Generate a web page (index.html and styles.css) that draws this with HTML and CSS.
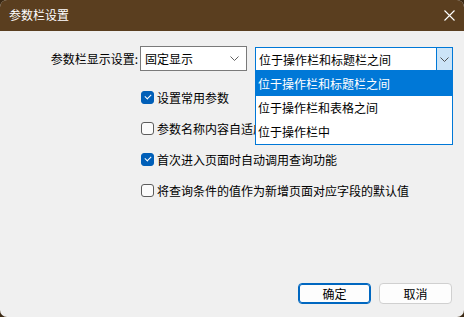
FILE: index.html
```html
<!DOCTYPE html>
<html>
	<head>
		<meta charset="utf-8">
		<title>参数栏设置</title>
		<link rel="stylesheet" href="styles.css">
	</head>
	<body>
		<div class="dialog">
			<div class="titlebar">
				<span class="title">参数栏设置</span>
				<svg class="close" width="11" height="11" viewBox="0 0 11 11">
					<path d="M0.5 0.5 L10.5 10.5 M10.5 0.5 L0.5 10.5" stroke="#fff" stroke-width="1.1" fill="none"/>
				</svg>
			</div>

			<div class="content">
				<div class="setting-row">
					<label class="row-label">参数栏显示设置:</label>
					<div class="combo mode">
						<span class="combo-text">固定显示</span>
						<svg class="chevron" width="9" height="5" viewBox="0 0 9 5">
							<path d="M0.5 0.5 L4.5 4.5 L8.5 0.5" stroke="#606060" fill="none"/>
						</svg>
					</div>
					<div class="combo position">
						<span class="combo-text">位于操作栏和标题栏之间</span>
						<span class="combo-btn">
							<svg class="chevron" width="9" height="5" viewBox="0 0 9 5">
								<path d="M0.5 0.5 L4.5 4.5 L8.5 0.5" stroke="#505050" fill="none"/>
							</svg>
						</span>
						<ul class="combo-list">
							<li class="selected">位于操作栏和标题栏之间</li>
							<li>位于操作栏和表格之间</li>
							<li>位于操作栏中</li>
						</ul>
					</div>
				</div>

				<ul class="options">
					<li><span class="check on"></span>设置常用参数</li>
					<!-- the open list covers the end of this label -->
					<li><span class="check"></span><span class="clipped">参数名称内容自适应列宽</span></li>
					<li><span class="check on"></span>首次进入页面时自动调用查询功能</li>
					<li><span class="check"></span>将查询条件的值作为新增页面对应字段的默认值</li>
				</ul>
			</div>

			<div class="footer">
				<button class="btn primary">确定</button>
				<button class="btn">取消</button>
			</div>
		</div>
	</body>
</html>
```

FILE: styles.css
```css
* {margin: 0; padding: 0; box-sizing: border-box;}

html, body {
	width: 464px;
	height: 317px;
	background: #3b2914;
	overflow: hidden;
}

body {
	font-family: "Noto Sans CJK SC", "Microsoft YaHei", sans-serif;
	font-size: 12px;
	color: #000;
}

.dialog {
	width: 464px;
	height: 317px;
	background: #f0f0f0;
	border-radius: 7px;
	overflow: hidden;
	display: flex;
	flex-direction: column;
}

.titlebar {
	height: 31px;
	background: #5a3e1f;
	display: flex;
	align-items: center;
	justify-content: space-between;
	padding: 0 9px 1px 9px;
	color: #fff;
}

.titlebar .title {
	font-size: 12px;
	line-height: 16px;
}

.content {
	padding-top: 15px;
}

.setting-row {
	display: flex;
	align-items: flex-start;
	padding-left: 47px;
}

.row-label {
	width: 92px;
	line-height: 25px;
	text-align: right;
	padding-right: 1px;
}

.combo {
	background: #fff;
	display: flex;
	align-items: center;
	position: relative;
}

.combo.mode {
	width: 107px;
	height: 25px;
	border: 1px solid #7a7a7a;
	margin-left: 1px;
	padding: 0 7px 0 4px;
	justify-content: space-between;
}

.combo.position {
	width: 198px;
	height: 24px;
	margin-left: 8px;
	margin-top: 1px;
	border: 1px solid #0078d7;
	padding-left: 3px;
	justify-content: space-between;
}

.combo-btn {
	width: 16px;
	height: 22px;
	background: #cce4f7;
	border-left: 1px solid #0078d7;
	display: flex;
	align-items: center;
	justify-content: center;
}

.combo-list {
	position: absolute;
	left: -1px;
	top: 23px;
	width: 198px;
	list-style: none;
	background: #fff;
	border: 1px solid #0078d7;
	z-index: 2;
}

.combo-list li {
	height: 24px;
	line-height: 24px;
	padding-left: 2px;
}

.combo-list li.selected {
	background: #0078d7;
	color: #fff;
}

.options {
	list-style: none;
	margin-top: 18px;
	padding-left: 141px;
	display: flex;
	flex-direction: column;
	gap: 15px;
}

.options li {
	display: flex;
	align-items: center;
	height: 16px;
	white-space: nowrap;
}

.options .clipped {
	width: 98px;
	overflow: hidden;
}

.check {
	width: 13px;
	height: 13px;
	border: 1px solid #5c5c5c;
	border-radius: 3px;
	background: #fbfbfb;
	margin-right: 3px;
	position: relative;
	flex-shrink: 0;
}

.check.on {
	background: #005fb8;
	border-color: #005fb8;
}

.check.on::after {
	content: "";
	position: absolute;
	left: 3px;
	top: 2px;
	width: 5px;
	height: 3px;
	border-left: 1.2px solid #fff;
	border-bottom: 1.2px solid #fff;
	transform: rotate(-45deg);
}

.footer {
	margin-top: auto;
	display: flex;
	justify-content: flex-end;
	gap: 8px;
	padding: 0 12px 13px 0;
}

.btn {
	width: 73px;
	height: 21px;
	background: #fdfdfd;
	border: 1px solid #d0d0d0;
	border-radius: 4px;
	font-family: inherit;
	font-size: 12px;
	color: #000;
}

.btn.primary {
	border: 1px solid #0067c0;
	box-shadow: inset 0 0 0 1px #0067c0;
}
```
